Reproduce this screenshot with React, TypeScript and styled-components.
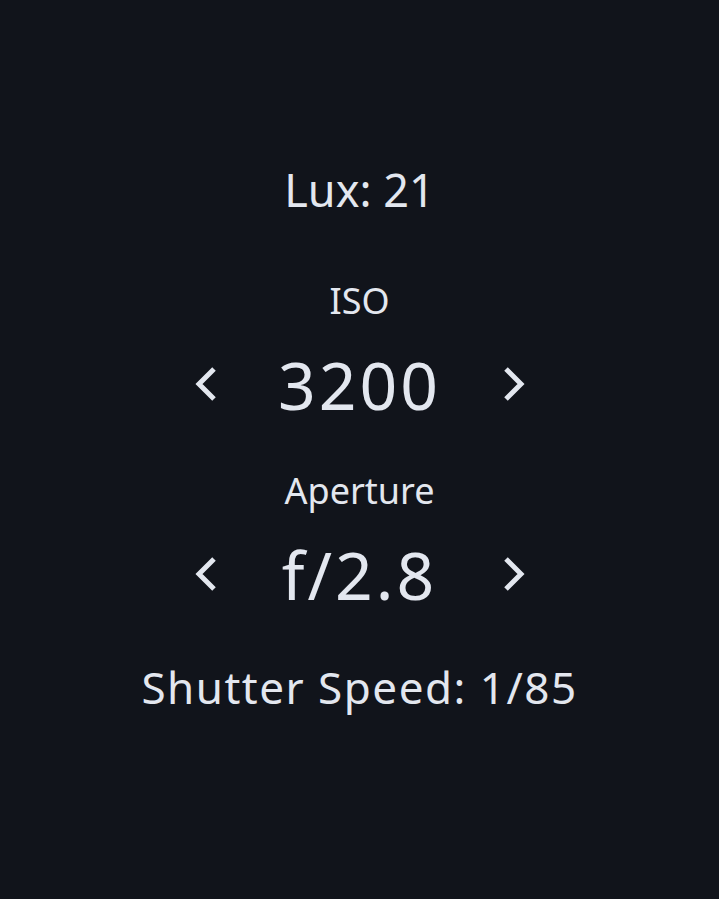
import React from "react";
import styled, { createGlobalStyle } from "styled-components";

const Global = createGlobalStyle`
  html, body { margin: 0; padding: 0; background: #11141b; }
  body { font-family: "Noto Sans", "DejaVu Sans", sans-serif; color: #e3e7ef; }
`;

const Screen = styled.main`
  min-height: 100vh;
  box-sizing: border-box;
  display: flex;
  flex-direction: column;
  align-items: center;
  justify-content: center;
  padding-bottom: 24px;
`;

const Lux = styled.div`
  font-size: 45px;
  line-height: 1;
  margin-bottom: 71px;
`;

const Label = styled.div`
  font-size: 36px;
  line-height: 1;
  margin-bottom: 32px;
`;

const Stepper = styled.div`
  display: flex;
  align-items: center;
  gap: 58px;
  margin-bottom: 56px;
`;

const Value = styled.div`
  font-size: 66px;
  line-height: 1;
  letter-spacing: 3px;
  width: 170px;
  text-align: center;
  white-space: nowrap;
`;

const Arrow = styled.button`
  background: none;
  border: none;
  padding: 0;
  color: #e3e7ef;
  display: flex;
  align-items: center;
  cursor: pointer;
`;

const Shutter = styled.div`
  font-size: 44px;
  line-height: 1;
  letter-spacing: 1.5px;
  margin-top: 2px;
`;

const Chevron = ({ dir }: { dir: "left" | "right" }) => (
  <svg width="24" height="36" viewBox="0 0 24 36" fill="none">
    <path
      d={dir === "left" ? "M21 3 L6 18 L21 33" : "M3 3 L18 18 L3 33"}
      stroke="#e3e7ef"
      strokeWidth="5"
      strokeLinecap="butt"
      strokeLinejoin="miter"
    />
  </svg>
);

export default function App() {
  return (
    <>
      <Global />
      <Screen>
        <Lux>Lux: 21</Lux>
        <Label>ISO</Label>
        <Stepper>
          <Arrow aria-label="previous ISO"><Chevron dir="left" /></Arrow>
          <Value>3200</Value>
          <Arrow aria-label="next ISO"><Chevron dir="right" /></Arrow>
        </Stepper>
        <Label>Aperture</Label>
        <Stepper>
          <Arrow aria-label="previous aperture"><Chevron dir="left" /></Arrow>
          <Value>f/2.8</Value>
          <Arrow aria-label="next aperture"><Chevron dir="right" /></Arrow>
        </Stepper>
        <Shutter>Shutter Speed: 1/85</Shutter>
      </Screen>
    </>
  );
}
